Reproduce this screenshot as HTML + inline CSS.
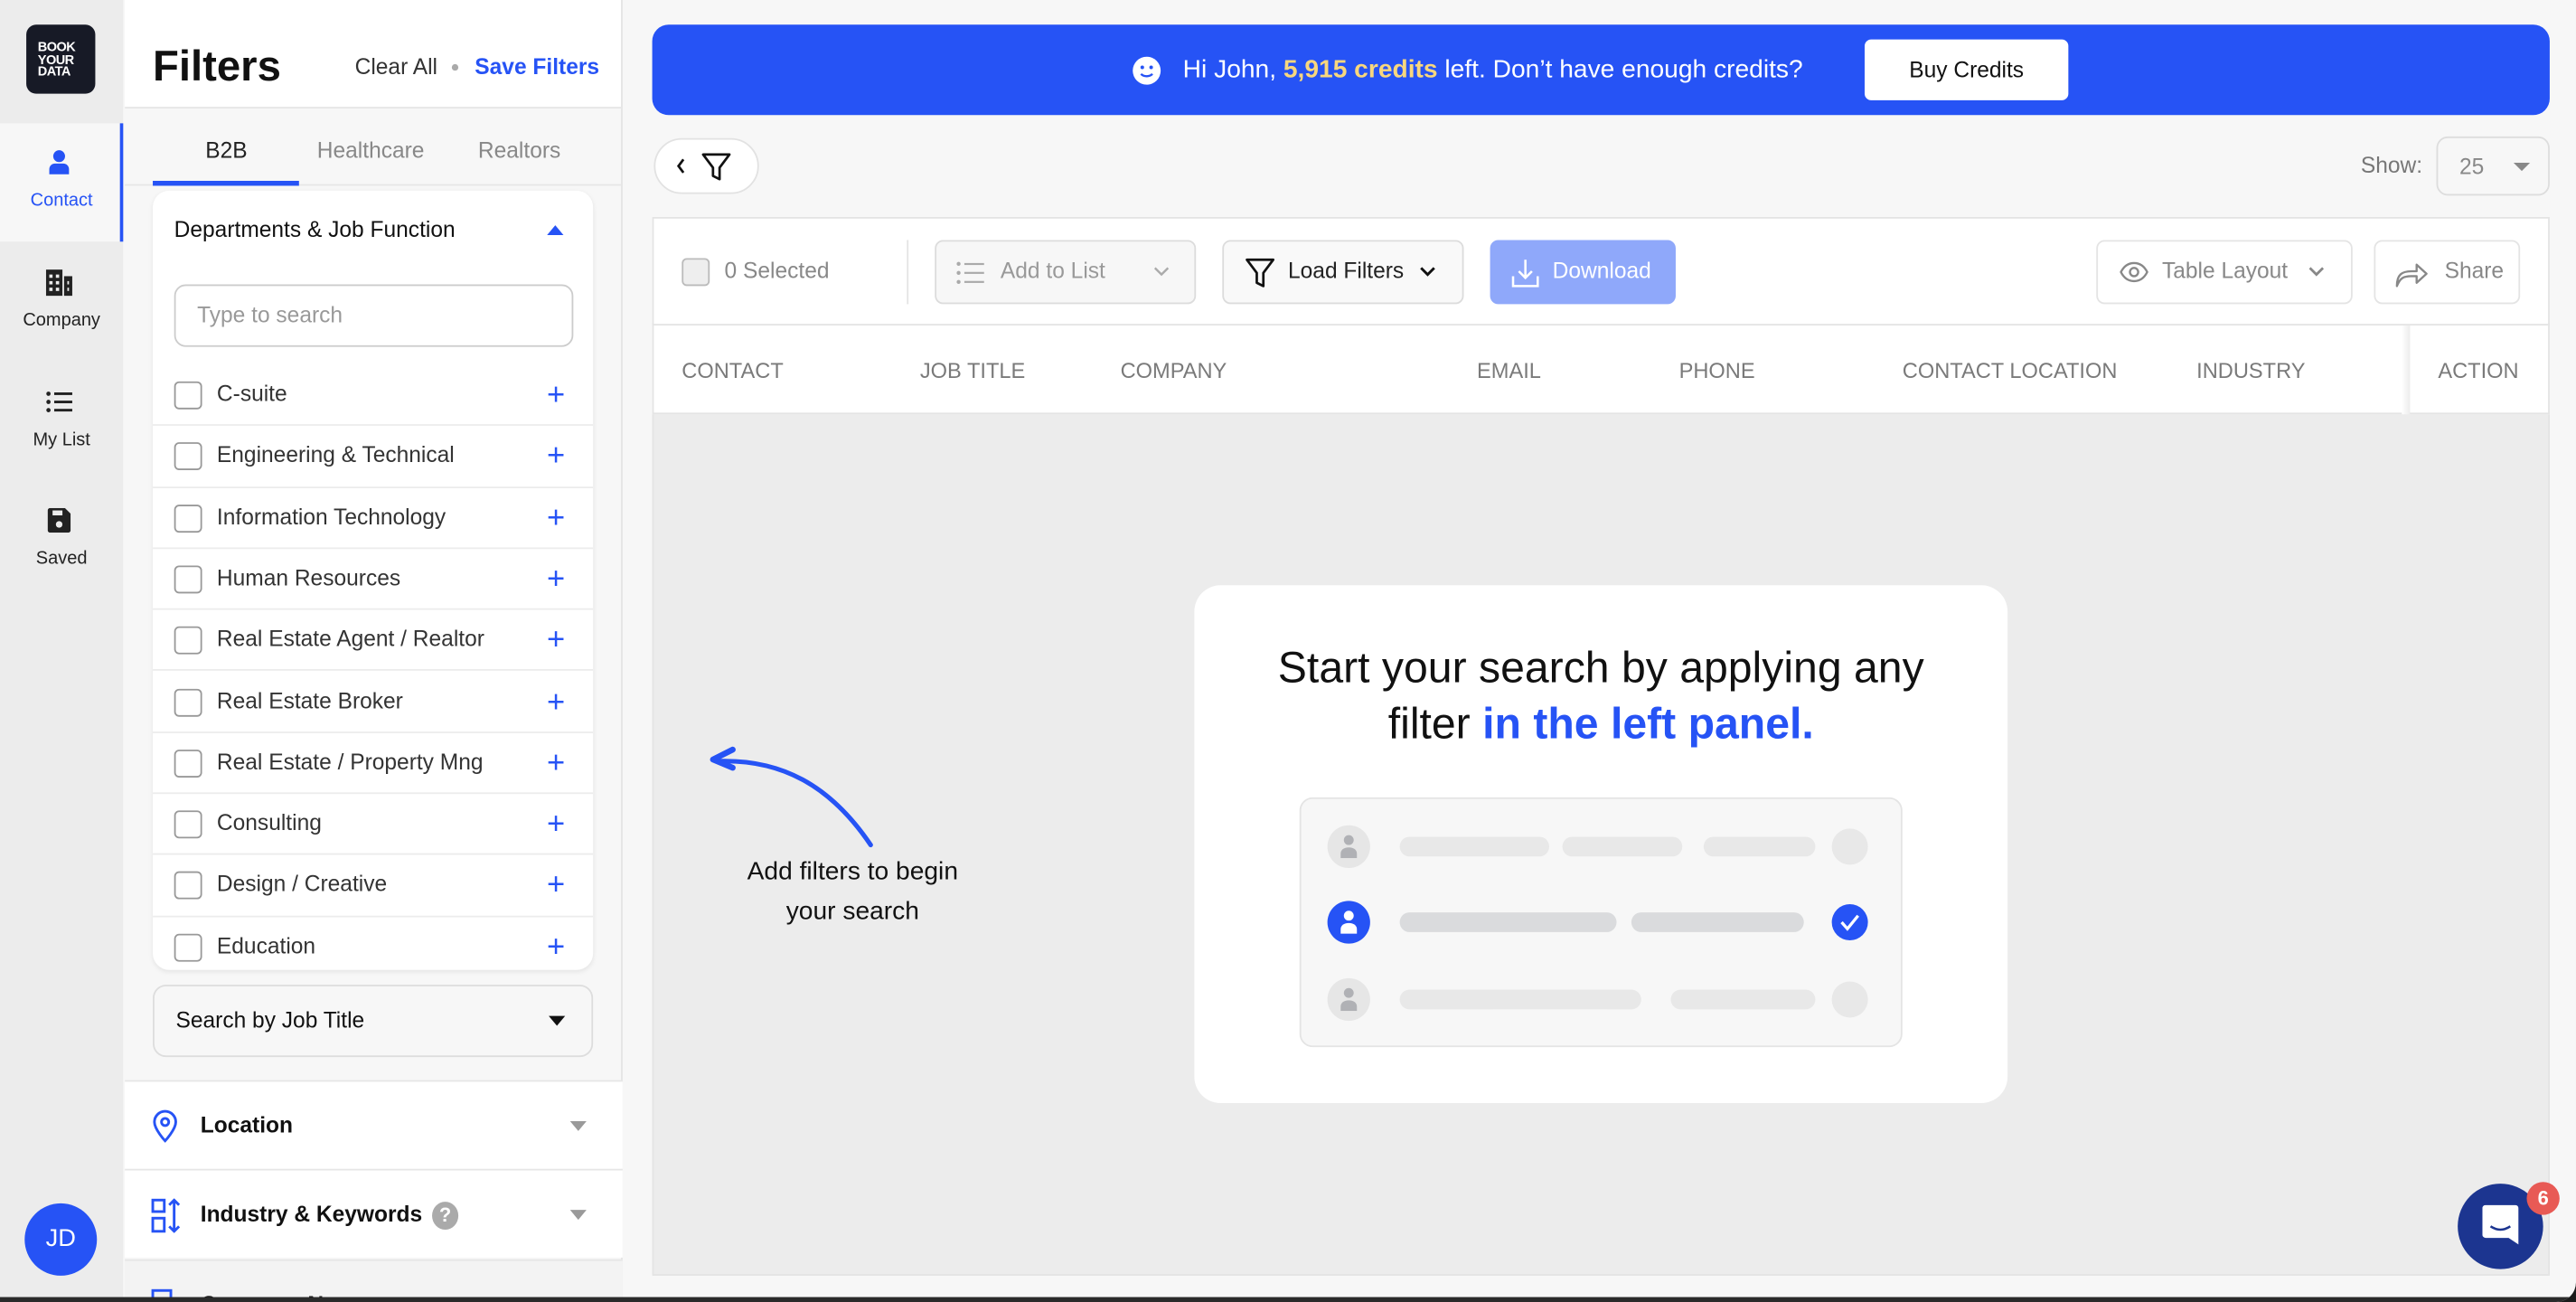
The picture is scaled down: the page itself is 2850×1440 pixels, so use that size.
<!DOCTYPE html>
<html><head><meta charset="utf-8"><style>
*{box-sizing:border-box;margin:0;padding:0}
html,body{width:2850px;height:1440px;overflow:hidden;background:#1a1a1a}
#s{position:absolute;left:0;top:0;width:1568px;height:792px;transform-origin:0 0;transform:scale(1.81760,1.81818);background:#f7f7f7;font-family:"Liberation Sans",sans-serif;color:#111;border-bottom-right-radius:12px;overflow:hidden}
.a{position:absolute}
.rail{left:0;top:0;width:75px;height:792px;background:#ececec}
.ri{position:absolute;left:0;width:75px;text-align:center;font-size:11px;color:#222}
.panel{left:76px;top:0;width:303px;height:792px;background:#f7f7f7;border-right:1px solid #e4e4e4}
.row{position:absolute;left:0;width:268px;height:37.3px;border-bottom:1px solid #ececec;font-size:13.5px;color:#333}
.cb{position:absolute;left:13px;top:10px;width:17px;height:17px;border:1.3px solid #999;border-radius:3px;background:#fff}
.row span{position:absolute;left:39px;top:10px}
.pl{position:absolute;right:17px;top:9px;color:#2653f5;font-size:19px;line-height:19px}
.sec{position:absolute;left:0;width:303px;height:54px;background:#fff;border-top:1px solid #e6e6e6;font-weight:bold;font-size:13.5px}
.tri{position:absolute;width:0;height:0;border-left:5px solid transparent;border-right:5px solid transparent;border-top:6px solid #9a9a9a}
.btn{position:absolute;top:146px;height:39px;border:1px solid #dcdcdc;border-radius:5px;font-size:13.5px;color:#222}
.th{position:absolute;top:218px;font-size:13px;color:#7a7a7a}
.bar{position:absolute;height:12px;border-radius:6px}
</style></head><body><div id="s">
<div class="a rail">
 <div class="a" style="left:16px;top:15px;width:42px;height:42px;background:#171a26;border-radius:6px;color:#fff;font-weight:bold;font-size:8px;line-height:7.5px;padding:10px 0 0 7px;letter-spacing:-.3px">BOOK<br>YOUR<br>DATA</div>
 <div class="a" style="left:0;top:75px;width:75px;height:72px;background:#f7f7f7;border-right:2px solid #2653f5"></div>
 <svg class="a" style="left:29px;top:91px" width="14" height="16" viewBox="0 0 14 16"><circle cx="7" cy="4" r="3.6" fill="#2653f5"/><path d="M1 15v-3c0-2 1.5-3.5 3.5-3.5h5c2 0 3.5 1.5 3.5 3.5v3z" fill="#2653f5"/></svg>
 <div class="ri" style="top:116px;color:#2653f5">Contact</div>
 <svg class="a" style="left:28px;top:163px" width="16" height="17" viewBox="0 0 16 17"><rect x="0" y="1" width="10" height="16" fill="#222"/><rect x="11" y="5" width="5" height="12" fill="#222"/><g fill="#ececec"><rect x="2" y="4" width="2" height="2"/><rect x="6" y="4" width="2" height="2"/><rect x="2" y="8" width="2" height="2"/><rect x="6" y="8" width="2" height="2"/><rect x="2" y="12" width="2" height="2"/><rect x="6" y="12" width="2" height="2"/><rect x="13" y="8" width="1" height="2"/><rect x="13" y="12" width="1" height="2"/></g></svg>
 <div class="ri" style="top:189px">Company</div>
 <svg class="a" style="left:28px;top:238px" width="16" height="13" viewBox="0 0 16 13"><g fill="#222"><circle cx="1.5" cy="1.5" r="1.3"/><circle cx="1.5" cy="6.5" r="1.3"/><circle cx="1.5" cy="11.5" r="1.3"/><rect x="5" y="0.7" width="11" height="1.6"/><rect x="5" y="5.7" width="11" height="1.6"/><rect x="5" y="10.7" width="11" height="1.6"/></g></svg>
 <div class="ri" style="top:262px">My List</div>
 <svg class="a" style="left:29px;top:309px" width="14" height="15" viewBox="0 0 14 15"><path d="M0 1.5C0 .7.7 0 1.5 0h9L14 3.5v10c0 .8-.7 1.5-1.5 1.5h-11C.7 15 0 14.3 0 13.5z" fill="#222"/><rect x="3" y="1.5" width="6" height="3" fill="#ececec"/><circle cx="7" cy="10" r="2" fill="#ececec"/></svg>
 <div class="ri" style="top:334px">Saved</div>
 <div class="a" style="left:15px;top:732px;width:44px;height:44px;border-radius:50%;background:#2653f5;color:#fff;font-size:15px;text-align:center;line-height:44px">JD</div>
</div>
<div class="a panel">
 <div class="a" style="left:0;top:0;width:302px;height:66px;background:#fff;border-bottom:1px solid #e6e6e6"></div>
 <div class="a" style="left:17px;top:25px;font-size:26px;font-weight:bold">Filters</div>
 <div class="a" style="left:140px;top:33px;font-size:13.5px;color:#333">Clear All</div>
 <div class="a" style="left:199px;top:39px;width:4px;height:4px;border-radius:50%;background:#aaa"></div>
 <div class="a" style="left:213px;top:33px;font-size:13.5px;color:#2653f5;font-weight:bold">Save Filters</div>
 <div class="a" style="left:0;top:112px;width:302px;height:1px;background:#e6e6e6"></div>
 <div class="a" style="left:49px;top:84px;font-size:13.5px;color:#222">B2B</div>
 <div class="a" style="left:117px;top:84px;font-size:13.5px;color:#888">Healthcare</div>
 <div class="a" style="left:215px;top:84px;font-size:13.5px;color:#888">Realtors</div>
 <div class="a" style="left:17px;top:110px;width:89px;height:3px;background:#2653f5"></div>
 <div class="a" style="left:17px;top:116px;width:268px;height:474px;background:#fff;border-radius:10px;box-shadow:0 1px 3px rgba(0,0,0,.08);overflow:hidden">
  <div class="a" style="left:13px;top:16px;font-size:13.5px">Departments &amp; Job Function</div>
  <div class="a" style="left:240px;top:21px;width:0;height:0;border-left:5px solid transparent;border-right:5px solid transparent;border-bottom:6px solid #2653f5"></div>
  <div class="a" style="left:13px;top:57px;width:243px;height:38px;border:1px solid #ccc;border-radius:7px;font-size:13.5px;color:#999;padding:10px 13px">Type to search</div>
  <div class="row" style="top:106px"><div class="cb"></div><span>C-suite</span><div class="pl">+</div></div>
  <div class="row" style="top:143.3px"><div class="cb"></div><span>Engineering &amp; Technical</span><div class="pl">+</div></div>
  <div class="row" style="top:180.6px"><div class="cb"></div><span>Information Technology</span><div class="pl">+</div></div>
  <div class="row" style="top:217.9px"><div class="cb"></div><span>Human Resources</span><div class="pl">+</div></div>
  <div class="row" style="top:255.2px"><div class="cb"></div><span>Real Estate Agent / Realtor</span><div class="pl">+</div></div>
  <div class="row" style="top:292.5px"><div class="cb"></div><span>Real Estate Broker</span><div class="pl">+</div></div>
  <div class="row" style="top:329.8px"><div class="cb"></div><span>Real Estate / Property Mng</span><div class="pl">+</div></div>
  <div class="row" style="top:367.1px"><div class="cb"></div><span>Consulting</span><div class="pl">+</div></div>
  <div class="row" style="top:404.4px"><div class="cb"></div><span>Design / Creative</span><div class="pl">+</div></div>
  <div class="row" style="top:441.7px"><div class="cb"></div><span>Education</span><div class="pl">+</div></div>
 </div>
 <div class="a" style="left:17px;top:599px;width:268px;height:44px;border:1px solid #ddd;border-radius:8px;background:#f7f7f7;font-size:13.5px;padding:13px 13px">Search by Job Title</div>
 <div class="a" style="left:258px;top:618px;width:0;height:0;border-left:5px solid transparent;border-right:5px solid transparent;border-top:6px solid #111"></div>
 <div class="sec" style="top:657px"><svg class="a" style="left:17px;top:17px" width="15" height="20" viewBox="0 0 15 20"><path d="M7.5 19S1 12 1 7.5a6.5 6.5 0 0113 0C14 12 7.5 19 7.5 19z" fill="none" stroke="#2653f5" stroke-width="1.6"/><circle cx="7.5" cy="7.5" r="2.2" fill="none" stroke="#2653f5" stroke-width="1.6"/></svg><span class="a" style="left:46px;top:19px">Location</span><div class="tri" style="left:271px;top:24px"></div></div>
 <div class="sec" style="top:711px"><svg class="a" style="left:16px;top:17px" width="19" height="21" viewBox="0 0 19 21"><g fill="none" stroke="#2653f5" stroke-width="1.6"><rect x="1" y="1" width="7" height="7"/><rect x="1" y="12" width="7" height="8"/><path d="M14 1v19M11 4l3-3 3 3M11 17l3 3 3-3"/></g></svg><span class="a" style="left:46px;top:19px">Industry &amp; Keywords</span><div class="a" style="left:187px;top:19px;width:16px;height:17px;border-radius:50%;background:#aaa;color:#fff;font-size:12px;text-align:center;line-height:17px">?</div><div class="tri" style="left:271px;top:24px"></div></div>
 <div class="sec" style="top:766px;background:#f3f3f3"><svg class="a" style="left:16px;top:17px" width="19" height="20" viewBox="0 0 19 20"><rect x="1" y="1" width="11" height="18" fill="none" stroke="#2653f5" stroke-width="1.6"/><rect x="12" y="6" width="6" height="13" fill="none" stroke="#2653f5" stroke-width="1.6"/></svg><span class="a" style="left:46px;top:19px">Company Name</span><div class="tri" style="left:271px;top:24px"></div></div>
</div>
<div class="a" style="left:397px;top:15px;width:1155px;height:55px;background:#2653f5;border-radius:10px"></div>
<svg class="a" style="left:689px;top:34px" width="18" height="18" viewBox="0 0 18 18"><circle cx="9" cy="9" r="8.5" fill="#fff"/><circle cx="6.3" cy="7" r="1.1" fill="#2653f5"/><circle cx="11.7" cy="7" r="1.1" fill="#2653f5"/><path d="M5.5 11c1.8 1.8 5.2 1.8 7 0" stroke="#2653f5" stroke-width="1.3" fill="none"/></svg>
<div class="a" style="left:720px;top:34px;font-size:15.5px;color:#fff">Hi John, <b style="color:#f8d77e">5,915 credits</b> left. Don’t have enough credits?</div>
<div class="a" style="left:1135px;top:24px;width:124px;height:37px;background:#fff;border-radius:4px;font-size:13.5px;text-align:center;line-height:37px">Buy Credits</div>
<div class="a" style="left:398px;top:84px;width:64px;height:34px;background:#fff;border:1px solid #e2e2e2;border-radius:17px"></div>
<svg class="a" style="left:410px;top:92px" width="36" height="19" viewBox="0 0 36 19"><path d="M6 5L3 9l3 4" fill="none" stroke="#111" stroke-width="1.5"/><path d="M18 2h16l-6 8v7l-4 -2v-5z" fill="none" stroke="#111" stroke-width="1.5" stroke-linejoin="round"/></svg>
<div class="a" style="left:1437px;top:93px;font-size:13.5px;color:#777">Show:</div>
<div class="a" style="left:1483px;top:83px;width:69px;height:36px;border:1px solid #ddd;border-radius:7px;font-size:13.5px;color:#888;padding:10px 13px">25</div>
<div class="a" style="left:1530px;top:99px;width:0;height:0;border-left:5px solid transparent;border-right:5px solid transparent;border-top:5px solid #888"></div>
<div class="a" style="left:397px;top:132px;width:1155px;height:644px;background:#ececec;border:1px solid #e4e4e4"></div>
<div class="a" style="left:397px;top:132px;width:1155px;height:120px;background:#fff;border:1px solid #e4e4e4"></div>
<div class="a" style="left:397px;top:197px;width:1155px;height:1px;background:#e4e4e4"></div>
<div class="a" style="left:415px;top:157px;width:17px;height:17px;border:1px solid #bbb;border-radius:3px;background:#eee"></div>
<div class="a" style="left:441px;top:157px;font-size:13.5px;color:#888">0 Selected</div>
<div class="a" style="left:552px;top:146px;width:1px;height:39px;background:#e4e4e4"></div>
<div class="btn" style="left:569px;width:159px;background:#f7f7f7;color:#999"><svg class="a" style="left:12px;top:12px" width="18" height="14" viewBox="0 0 18 14"><g fill="#aaa"><circle cx="1.5" cy="1.5" r="1.2"/><circle cx="1.5" cy="7" r="1.2"/><circle cx="1.5" cy="12.5" r="1.2"/><rect x="5" y="1" width="12" height="1.2"/><rect x="5" y="6.4" width="12" height="1.2"/><rect x="5" y="11.9" width="12" height="1.2"/></g></svg><span class="a" style="left:39px;top:10px">Add to List</span><svg class="a" style="left:132px;top:15px" width="10" height="7"><path d="M1 1l4 4 4-4" fill="none" stroke="#aaa" stroke-width="1.3"/></svg></div>
<div class="btn" style="left:744px;width:147px;background:#f9f9f9"><svg class="a" style="left:13px;top:10px" width="18" height="19" viewBox="0 0 18 19"><path d="M1 1h16l-6 8v8l-4-2V9z" fill="none" stroke="#111" stroke-width="1.5" stroke-linejoin="round"/></svg><span class="a" style="left:39px;top:10px">Load Filters</span><svg class="a" style="left:119px;top:15px" width="10" height="7"><path d="M1 1l4 4 4-4" fill="none" stroke="#111" stroke-width="1.6"/></svg></div>
<div class="btn" style="left:907px;width:113px;background:#8fa8fa;border-color:#8fa8fa;color:#fff"><svg class="a" style="left:12px;top:10px" width="17" height="18" viewBox="0 0 17 18"><path d="M8.5 1v11M4.5 8l4 4 4-4M1 11v6h15v-6" fill="none" stroke="#fff" stroke-width="1.4"/></svg><span class="a" style="left:37px;top:10px">Download</span></div>
<div class="btn" style="left:1276px;width:156px;color:#888;border-color:#e4e4e4"><svg class="a" style="left:13px;top:12px" width="18" height="13" viewBox="0 0 18 13"><path d="M1 6.5C3 2.5 6 1 9 1s6 1.5 8 5.5C15 10.5 12 12 9 12S3 10.5 1 6.5z" fill="none" stroke="#888" stroke-width="1.3"/><circle cx="9" cy="6.5" r="2.5" fill="none" stroke="#888" stroke-width="1.3"/></svg><span class="a" style="left:39px;top:10px">Table Layout</span><svg class="a" style="left:128px;top:15px" width="10" height="7"><path d="M1 1l4 4 4-4" fill="none" stroke="#888" stroke-width="1.5"/></svg></div>
<div class="btn" style="left:1445px;width:89px;color:#888;border-color:#e4e4e4"><svg class="a" style="left:12px;top:11px" width="20" height="17" viewBox="0 0 20 17"><path d="M1 16c0-7 3-9 9-9h3V3l6 5.5-6 5.5v-4h-3c-5 0-7 1-9 6z" fill="none" stroke="#888" stroke-width="1.3" stroke-linejoin="round"/></svg><span class="a" style="left:42px;top:10px">Share</span></div>
<div class="th" style="left:415px">CONTACT</div>
<div class="th" style="left:560px">JOB TITLE</div>
<div class="th" style="left:682px">COMPANY</div>
<div class="th" style="left:899px">EMAIL</div>
<div class="th" style="left:1022px">PHONE</div>
<div class="th" style="left:1158px">CONTACT LOCATION</div>
<div class="th" style="left:1337px">INDUSTRY</div>
<div class="a" style="left:1462px;top:198px;width:5px;height:54px;background:linear-gradient(90deg,#fff,#ececec)"></div>
<div class="th" style="left:1484px">ACTION</div>
<svg class="a" style="left:430px;top:452px" width="105" height="66" viewBox="0 0 105 66"><path d="M8 11C45 10 75 25 100 62" fill="none" stroke="#2653f5" stroke-width="2.8" stroke-linecap="round"/><path d="M16 4L4 10l12 5" fill="none" stroke="#2653f5" stroke-width="3.6" stroke-linecap="round" stroke-linejoin="round"/></svg>
<div class="a" style="left:428px;top:519px;width:182px;text-align:center;font-size:15.5px;line-height:23.5px;color:#111">Add filters to begin<br>your search</div>
<div class="a" style="left:727px;top:356px;width:495px;height:315px;background:#fff;border-radius:16px"></div>
<div class="a" style="left:727px;top:389px;width:495px;text-align:center;font-size:26.5px;line-height:34px;color:#111">Start your search by applying any<br>filter <b style="color:#2653f5">in the left panel.</b></div>
<div class="a" style="left:791px;top:485px;width:367px;height:152px;background:#f7f7f7;border:1px solid #e4e4e4;border-radius:8px">
 <div class="a" style="left:16px;top:16px;width:26px;height:26px;border-radius:50%;background:#e6e6e6"></div>
 <svg class="a" style="left:24px;top:21px" width="10" height="15" viewBox="0 0 10 15"><circle cx="5" cy="4" r="3" fill="#b0b1b5"/><path d="M0 15v-2.5C0 10 2 8.5 5 8.5s5 1.5 5 4V15z" fill="#b0b1b5"/></svg>
 <div class="bar" style="left:60px;top:23px;width:91px;background:#e8e8e8"></div>
 <div class="bar" style="left:159px;top:23px;width:73px;background:#e8e8e8"></div>
 <div class="bar" style="left:245px;top:23px;width:68px;background:#e8e8e8"></div>
 <div class="a" style="left:323px;top:18px;width:22px;height:22px;border-radius:50%;background:#e8e8e8"></div>
 <div class="a" style="left:16px;top:62px;width:26px;height:26px;border-radius:50%;background:#2653f5"></div>
 <svg class="a" style="left:24px;top:67px" width="10" height="15" viewBox="0 0 10 15"><circle cx="5" cy="4" r="3" fill="#fff"/><path d="M0 15v-2.5C0 10 2 8.5 5 8.5s5 1.5 5 4V15z" fill="#fff"/></svg>
 <div class="bar" style="left:60px;top:69px;width:132px;background:#dadbdd"></div>
 <div class="bar" style="left:201px;top:69px;width:105px;background:#dadbdd"></div>
 <div class="a" style="left:323px;top:64px;width:22px;height:22px;border-radius:50%;background:#2653f5"></div>
 <svg class="a" style="left:327px;top:69px" width="14" height="12" viewBox="0 0 14 12"><path d="M2 6l3.5 4L12 2" fill="none" stroke="#fff" stroke-width="1.8"/></svg>
 <div class="a" style="left:16px;top:109px;width:26px;height:26px;border-radius:50%;background:#e6e6e6"></div>
 <svg class="a" style="left:24px;top:114px" width="10" height="15" viewBox="0 0 10 15"><circle cx="5" cy="4" r="3" fill="#b0b1b5"/><path d="M0 15v-2.5C0 10 2 8.5 5 8.5s5 1.5 5 4V15z" fill="#b0b1b5"/></svg>
 <div class="bar" style="left:60px;top:116px;width:147px;background:#e8e8e8"></div>
 <div class="bar" style="left:225px;top:116px;width:88px;background:#e8e8e8"></div>
 <div class="a" style="left:323px;top:111px;width:22px;height:22px;border-radius:50%;background:#e8e8e8"></div>
</div>
<div class="a" style="left:1496px;top:720px;width:52px;height:52px;border-radius:50%;background:#1c3590"></div>
<svg class="a" style="left:1511px;top:733px" width="22" height="25" viewBox="0 0 22 25"><path d="M2 0h18a2 2 0 012 2v22l-6-4H2a2 2 0 01-2-2V2a2 2 0 012-2z" fill="#fff"/><path d="M5 13q6 4 12 0" fill="none" stroke="#1c3590" stroke-width="1.4"/></svg>
<div class="a" style="left:1538px;top:719px;width:20px;height:20px;border-radius:50%;background:#e85a55;color:#fff;font-size:12px;font-weight:bold;text-align:center;line-height:20px">6</div>
<div class="a" style="left:0;top:789px;width:1568px;height:3px;background:#2a2a2a"></div>
</div></body></html>
